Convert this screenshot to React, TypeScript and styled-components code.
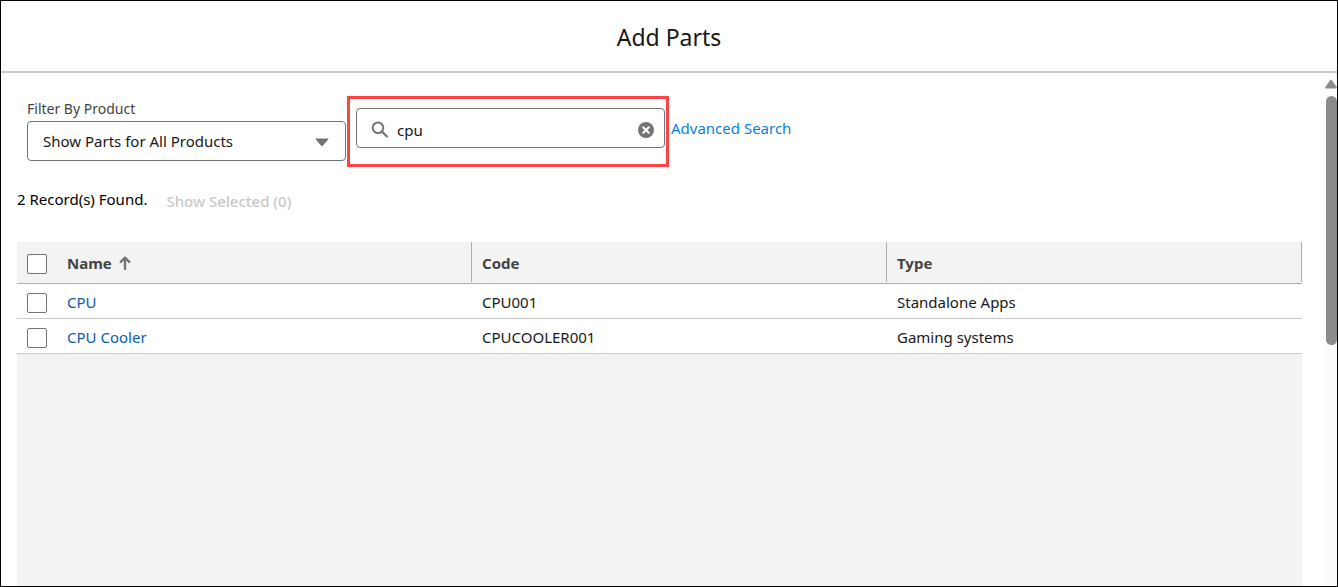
import React, { useState } from "react";
import styled, { createGlobalStyle } from "styled-components";

const GlobalStyle = createGlobalStyle`
  *, *::before, *::after { box-sizing: border-box; }
  body {
    margin: 0;
    background: #fff;
    color: #181818;
    font: 15px/20px "Segoe UI", "Noto Sans", sans-serif;
  }
  button, input, select { font: inherit; color: inherit; }
`;

const Modal = styled.main`
  display: flex;
  flex-direction: column;
  min-height: 100vh;
  border: 1px solid #000;
`;

const Header = styled.header`
  padding: 20px 16px 18px;
  border-bottom: 2px solid #c9c9c9;
  text-align: center;
`;

const Title = styled.h1`
  margin: 0;
  font-size: 23px;
  line-height: 32px;
  font-weight: 400;
`;

const Body = styled.div`
  flex: 1;
  display: flex;
`;

const Content = styled.section`
  flex: 1;
  display: flex;
  flex-direction: column;
  padding: 23px 20px 0 16px;
`;

const Toolbar = styled.div`
  display: flex;
  align-items: flex-start;
  padding-left: 10px;
`;

const Field = styled.div`
  width: 319px;
  margin-right: 1px;
`;

const FieldLabel = styled.label`
  display: block;
  font-size: 14px;
  line-height: 25px;
  color: #444;
`;

const SelectWrap = styled.div`
  position: relative;
  svg {
    position: absolute;
    right: 17px;
    top: 17px;
    pointer-events: none;
  }
`;

const Select = styled.select`
  display: block;
  appearance: none;
  width: 100%;
  height: 40px;
  padding: 0 40px 0 15px;
  border: 1px solid #747474;
  border-radius: 4px;
  background: #fff;
`;

const Highlight = styled.div`
  width: 322px;
  padding: 9px 1px 16px 6px;
  border: 3px solid #fb4444;
`;

const SearchBox = styled.div`
  display: flex;
  align-items: center;
  height: 40px;
  padding: 3px 10px 0 14px;
  border: 1px solid #747474;
  border-radius: 4px;
`;

const SearchInput = styled.input`
  flex: 1;
  min-width: 0;
  margin: 0 8px;
  padding: 0;
  border: 0;
  outline: 0;
  background: none;
`;

const ClearButton = styled.button`
  display: flex;
  padding: 0;
  border: 0;
  background: none;
`;

const AdvancedLink = styled.a`
  margin: 22px 0 0 2px;
  color: #0b7fdb;
  text-decoration: none;
`;

const Summary = styled.div`
  display: flex;
  gap: 19px;
  margin: 22px 0 31px;
`;

const Count = styled.span`
  color: #000;
`;

const ShowSelected = styled.button`
  margin: 2px 0 0;
  padding: 0;
  border: 0;
  background: none;
  font-weight: 500;
  &:disabled { color: #c9c9c9; }
`;

const TableArea = styled.div`
  flex: 1;
  background: #f3f3f3;
`;

const Table = styled.table`
  width: 100%;
  table-layout: fixed;
  border-collapse: separate;
  border-spacing: 0;
  text-align: left;
`;

const CheckColumn = styled.col`
  width: 40px;
`;

const HeadCell = styled.th<{ $divided?: boolean }>`
  height: 42px;
  padding: ${(p) => (p.$divided ? "0 10px" : "2px 10px 0")};
  border-bottom: 1px solid #aeaeae;
  background: ${(p) =>
    p.$divided
      ? "linear-gradient(#aeaeae, #aeaeae) right top / 1px 40px no-repeat"
      : "none"};
  color: #444;
  font-weight: 700;
`;

const Cell = styled.td`
  height: 35px;
  padding: 2px 10px 0;
  border-bottom: 1px solid #c9c9c9;
  background: #fff;
`;

const CheckCell = styled(Cell)`
  padding-top: 4px;
`;

const SortButton = styled.button`
  display: flex;
  align-items: center;
  gap: 7px;
  padding: 0;
  border: 0;
  background: none;
  font-weight: 700;
`;

const Checkbox = styled.input`
  display: block;
  appearance: none;
  width: 20px;
  height: 20px;
  margin: 0;
  border: 1px solid #747474;
  border-radius: 2px;
  background: #fff;
  &:checked { background: #0176d3; }
`;

const PartLink = styled.a`
  color: #0b5cab;
  text-decoration: none;
`;

const ScrollTrack = styled.div`
  width: 15px;
  padding: 6px 0 0 3px;
  background: #fcfcfc;
  overflow: hidden;
  svg { display: block; }
`;

const ScrollThumb = styled.div`
  width: 11px;
  height: 249px;
  margin: 7px 0 0 1px;
  border-radius: 6px;
  background: #8b8b8b;
`;

const parts = [
  { name: "CPU", code: "CPU001", type: "Standalone Apps" },
  { name: "CPU Cooler", code: "CPUCOOLER001", type: "Gaming systems" },
];

export default function App() {
  const [query, setQuery] = useState("cpu");
  return (
    <>
      <GlobalStyle />
      <Modal>
        <Header>
          <Title>Add Parts</Title>
        </Header>
        <Body>
          <Content>
            <Toolbar>
              <Field>
                <FieldLabel htmlFor="product">Filter By Product</FieldLabel>
                <SelectWrap>
                  <Select id="product">
                    <option>Show Parts for All Products</option>
                  </Select>
                  <svg width="14" height="9" viewBox="0 0 14 9" aria-hidden="true">
                    <path d="M1 .5h12q1 0 .4.8L7.6 8q-.6.7-1.2 0L.6 1.300Q0 .5 1 .5z" fill="#747474" />
                  </svg>
                </SelectWrap>
              </Field>
              <Highlight>
                <SearchBox>
                  <svg width="18" height="18" viewBox="0 0 18 18" fill="none" stroke="#747474" aria-hidden="true">
                    <circle cx="7" cy="6.700" r="5.300" strokeWidth="2" />
                    <path d="M10.900 10.600l5.100 4.900" strokeWidth="2.200" strokeLinecap="round" />
                  </svg>
                  <SearchInput
                    aria-label="Search parts"
                    value={query}
                    onChange={(e) => setQuery(e.target.value)}
                  />
                  <ClearButton type="button" aria-label="Clear search" onClick={() => setQuery("")}>
                    <svg width="16" height="16" viewBox="0 0 16 16">
                      <circle cx="8" cy="8" r="8" fill="#747474" />
                      <path d="M5.200 5.200l5.600 5.600M10.800 5.200l-5.600 5.600" stroke="#fff" strokeWidth="2" strokeLinecap="round" />
                    </svg>
                  </ClearButton>
                </SearchBox>
              </Highlight>
              <AdvancedLink href="#advanced">Advanced Search</AdvancedLink>
            </Toolbar>
            <Summary>
              <Count>2 Record(s) Found.</Count>
              <ShowSelected type="button" disabled>Show Selected (0)</ShowSelected>
            </Summary>
            <TableArea>
              <Table>
                <colgroup>
                  <CheckColumn />
                  <col />
                  <col />
                  <col />
                </colgroup>
                <thead>
                  <tr>
                    <HeadCell>
                      <Checkbox type="checkbox" aria-label="Select all parts" />
                    </HeadCell>
                    <HeadCell $divided aria-sort="ascending">
                      <SortButton type="button">
                        Name
                        <svg width="12" height="14" viewBox="0 0 12 14" fill="none" stroke="#747474" strokeLinecap="round" strokeLinejoin="round" aria-hidden="true">
                          <path d="M6 2v11M1.800 5.900L6 1.700l4.200 4.200" strokeWidth="2.400" />
                        </svg>
                      </SortButton>
                    </HeadCell>
                    <HeadCell $divided>Code</HeadCell>
                    <HeadCell $divided>Type</HeadCell>
                  </tr>
                </thead>
                <tbody>
                  {parts.map((part) => (
                    <tr key={part.code}>
                      <CheckCell>
                        <Checkbox type="checkbox" aria-label={`Select ${part.name}`} />
                      </CheckCell>
                      <Cell>
                        <PartLink href={`#${part.code}`}>{part.name}</PartLink>
                      </Cell>
                      <Cell>{part.code}</Cell>
                      <Cell>{part.type}</Cell>
                    </tr>
                  ))}
                </tbody>
              </Table>
            </TableArea>
          </Content>
          <ScrollTrack aria-hidden="true">
            <svg width="12" height="10" viewBox="0 0 12 10">
              <path d="M5.300 1Q6 .2 6.700 1l5 7Q12.300 9.500 11 9.500H1Q-.3 9.500.3 8z" fill="#8b8b8b" />
            </svg>
            <ScrollThumb />
          </ScrollTrack>
        </Body>
      </Modal>
    </>
  );
}
